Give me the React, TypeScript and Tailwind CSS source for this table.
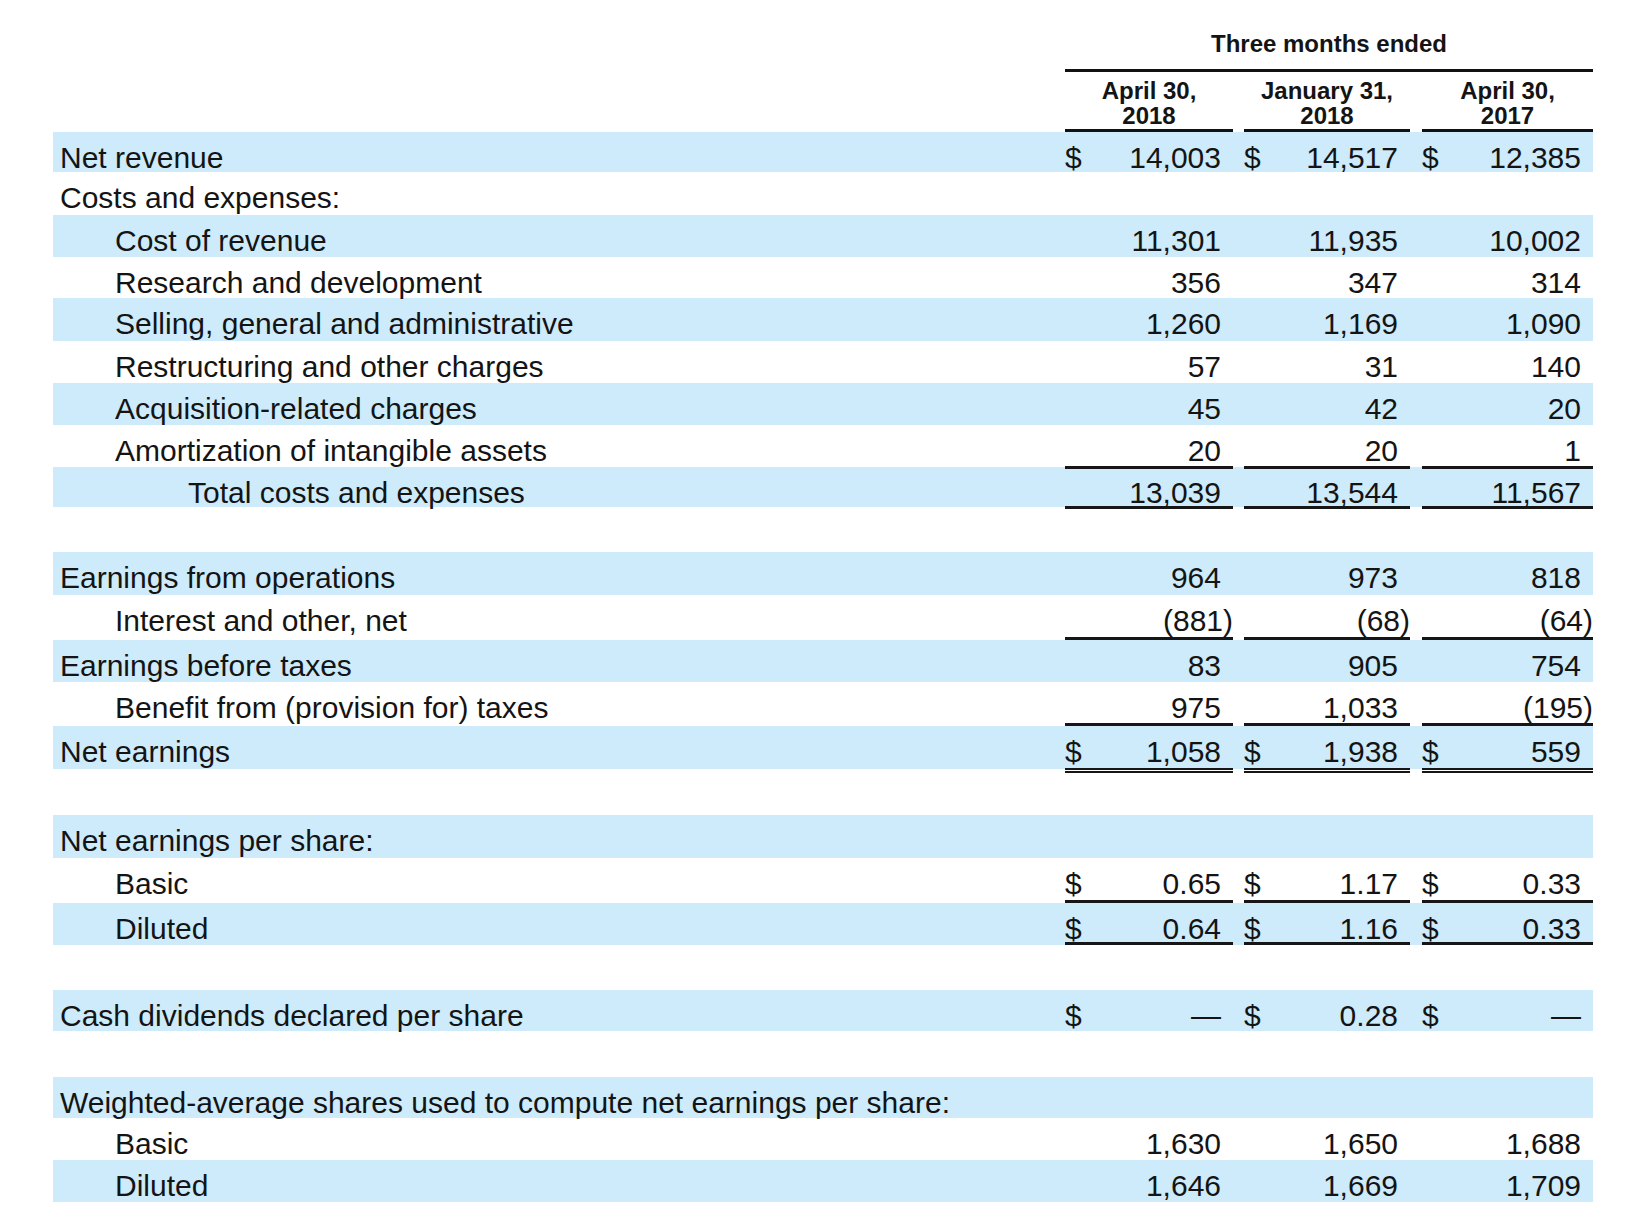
import React from "react";

type Line = "none" | "single" | "double" | "thick";

type Row = {
  label?: string;
  indent?: 0 | 1 | 2;
  band?: boolean;
  h: string;
  vals?: string[];
  dollar?: boolean;
  line?: Line;
  cellH?: string;
};

const rows: Row[] = [
  { label: "Net revenue", indent: 0, band: true, h: "h-[40px]", vals: ["14,003", "14,517", "12,385"], dollar: true },
  { label: "Costs and expenses:", indent: 0, h: "h-[43px]" },
  { label: "Cost of revenue", indent: 1, band: true, h: "h-[42px]", vals: ["11,301", "11,935", "10,002"] },
  { label: "Research and development", indent: 1, h: "h-[41px]", vals: ["356", "347", "314"] },
  { label: "Selling, general and administrative", indent: 1, band: true, h: "h-[43px]", vals: ["1,260", "1,169", "1,090"] },
  { label: "Restructuring and other charges", indent: 1, h: "h-[42px]", vals: ["57", "31", "140"] },
  { label: "Acquisition-related charges", indent: 1, band: true, h: "h-[42px]", vals: ["45", "42", "20"] },
  { label: "Amortization of intangible assets", indent: 1, h: "h-[42px]", vals: ["20", "20", "1"], line: "single", cellH: "h-[calc(100%+2px)]" },
  { label: "Total costs and expenses", indent: 2, band: true, h: "h-[40px]", vals: ["13,039", "13,544", "11,567"], line: "single", cellH: "h-[calc(100%+2px)]" },
  { h: "h-[45px]" },
  { label: "Earnings from operations", indent: 0, band: true, h: "h-[43px]", vals: ["964", "973", "818"] },
  { label: "Interest and other, net", indent: 1, h: "h-[45px]", vals: ["(881)", "(68)", "(64)"], line: "single" },
  { label: "Earnings before taxes", indent: 0, band: true, h: "h-[42px]", vals: ["83", "905", "754"] },
  { label: "Benefit from (provision for) taxes", indent: 1, h: "h-[44px]", vals: ["975", "1,033", "(195)"], line: "single" },
  { label: "Net earnings", indent: 0, band: true, h: "h-[43px]", vals: ["1,058", "1,938", "559"], dollar: true, line: "double", cellH: "h-[calc(100%+4px)]" },
  { h: "h-[46px]" },
  { label: "Net earnings per share:", indent: 0, band: true, h: "h-[43px]" },
  { label: "Basic", indent: 1, h: "h-[45px]", vals: ["0.65", "1.17", "0.33"], dollar: true, line: "single" },
  { label: "Diluted", indent: 1, band: true, h: "h-[42px]", vals: ["0.64", "1.16", "0.33"], dollar: true, line: "thick" },
  { h: "h-[45px]" },
  { label: "Cash dividends declared per share", indent: 0, band: true, h: "h-[41px]", vals: ["—", "0.28", "—"], dollar: true },
  { h: "h-[46px]" },
  { label: "Weighted-average shares used to compute net earnings per share:", indent: 0, band: true, h: "h-[41px]" },
  { label: "Basic", indent: 1, h: "h-[42px]", vals: ["1,630", "1,650", "1,688"] },
  { label: "Diluted", indent: 1, band: true, h: "h-[42px]", vals: ["1,646", "1,669", "1,709"] },
];

const colClass = ["w-[168px]", "w-[166px] ml-[11px]", "w-[171px] ml-[12px]"];

const indentClass = ["pl-[7px]", "pl-[62px]", "pl-[135px]"];

const lineClass: Record<Line, string> = {
  none: "",
  single: "border-b-[3px] border-[#161616]",
  double: "border-b-[5px] border-double border-[#161616]",
  thick: "border-b-[3px] border-[#161616]",
};

function Cell({ i, val, dollar, line, h }: { i: number; val?: string; dollar?: boolean; line: Line; h?: string }) {
  const neg = val?.endsWith(")");
  return (
    <div className={`${colClass[i]} ${h ?? "h-full"} shrink-0 flex justify-between pt-[11px] leading-[30px] ${lineClass[line]}`}>
      <span>{dollar ? "$" : ""}</span>
      <span className={neg ? "pr-0" : "pr-[12px]"}>{val}</span>
    </div>
  );
}

export default function App() {
  return (
    <div
      className="bg-white text-[#141414] pl-[53px] w-[1633px]"
      style={{ fontFamily: '"Liberation Sans", Arial, sans-serif' }}
    >
      {/* Header */}
      <div className="flex">
        <div className="w-[1012px]" />
        <div className="w-[528px] font-bold text-[24px]">
          <div className="h-[72px] pt-[32px] leading-[24px] text-center border-b-[3px] border-[#111]">
            Three months ended
          </div>
          <div className="flex">
            <div className="w-[168px] h-[60px] pt-[6px] leading-[25px] text-center border-b-[3px] border-[#111]">
              April 30,
              <br />
              2018
            </div>
            <div className="w-[166px] ml-[11px] h-[60px] pt-[6px] leading-[25px] text-center border-b-[3px] border-[#111]">
              January 31,
              <br />
              2018
            </div>
            <div className="w-[171px] ml-[12px] h-[60px] pt-[6px] leading-[25px] text-center border-b-[3px] border-[#111]">
              April 30,
              <br />
              2017
            </div>
          </div>
        </div>
      </div>

      {/* Body rows */}
      <div className="w-[1540px] text-[30px]">
        {rows.map((r, idx) => (
          <div key={idx} className={`flex items-start ${r.h} ${r.band ? "bg-[#cdebfb]" : ""}`}>
            <div className={`w-[1012px] shrink-0 pt-[11px] leading-[30px] whitespace-nowrap ${indentClass[r.indent ?? 0]}`}>
              {r.label}
            </div>
            {r.vals &&
              r.vals.map((v, i) => (
                <Cell key={i} i={i} val={v} dollar={r.dollar} line={r.line ?? "none"} h={r.cellH} />
              ))}
          </div>
        ))}
      </div>
    </div>
  );
}
